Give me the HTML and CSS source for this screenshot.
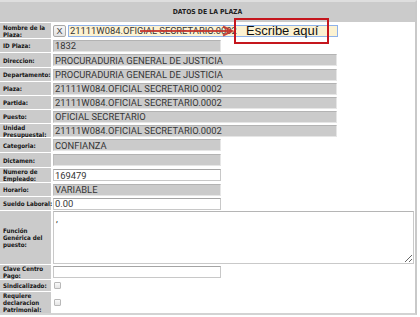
FILE: index.html
```html
<!DOCTYPE html>
<html lang="es">
<head>
    <meta charset="UTF-8">
    <meta name="viewport" content="width=device-width, initial-scale=1.0">
    <title>Datos de la plaza</title>
    <link rel="stylesheet" href="styles.css">
</head>
<body>
    <div class="panel">
        <div class="plaza-grid">
            <div class="titulo">DATOS DE LA PLAZA</div>

            <div class="lbl">Nombre de la<br>Plaza:</div>
            <div class="val">
                <button type="button" class="btn-x">X</button>
                <input type="text" class="campo nombre" spellcheck="false" value="21111W084.OFICIAL SECRETARIO.0002">
            </div>

            <div class="lbl">ID Plaza:</div>
            <div class="val"><input class="campo corto" readonly value="1832"></div>

            <div class="lbl">Direccion:</div>
            <div class="val"><input class="campo largo" readonly value="PROCURADURIA GENERAL DE JUSTICIA"></div>

            <div class="lbl">Departamento:</div>
            <div class="val"><input class="campo largo" readonly value="PROCURADURIA GENERAL DE JUSTICIA"></div>

            <div class="lbl">Plaza:</div>
            <div class="val"><input class="campo largo" readonly value="21111W084.OFICIAL SECRETARIO.0002"></div>

            <div class="lbl">Partida:</div>
            <div class="val"><input class="campo largo" readonly value="21111W084.OFICIAL SECRETARIO.0002"></div>

            <div class="lbl">Puesto:</div>
            <div class="val"><input class="campo largo" readonly value="OFICIAL SECRETARIO"></div>

            <div class="lbl">Unidad<br>Presupuestal:</div>
            <div class="val"><input class="campo largo" readonly value="21111W084.OFICIAL SECRETARIO.0002"></div>

            <div class="lbl">Categoria:</div>
            <div class="val"><input class="campo corto" readonly value="CONFIANZA"></div>

            <div class="lbl">Dictamen:</div>
            <div class="val"><input class="campo corto" readonly value=""></div>

            <div class="lbl">Numero de<br>Empleado:</div>
            <div class="val"><input class="campo corto blanco" value="169479"></div>

            <div class="lbl">Horario:</div>
            <div class="val"><input class="campo corto" readonly value="VARIABLE"></div>

            <div class="lbl">Sueldo Laboral:</div>
            <div class="val"><input class="campo corto blanco" value="0.00"></div>

            <div class="lbl">Función<br>Genérica del<br>puesto:</div>
            <div class="val"><textarea class="funcion" spellcheck="false">,</textarea></div>

            <div class="lbl">Clave Centro<br>Pago:</div>
            <div class="val"><input class="campo corto blanco" value=""></div>

            <div class="lbl">Sindicalizado:</div>
            <div class="val"><input type="checkbox" class="check"></div>

            <div class="lbl">Requiere<br>declaracion<br>Patrimonial:</div>
            <div class="val"><input type="checkbox" class="check"></div>
        </div>

        <!-- anotacion sobre la captura -->
        <svg class="flecha" width="98" height="12" viewBox="0 0 98 12">
            <line x1="2" y1="6" x2="94" y2="6" />
            <polyline points="85,1.5 94,6 85,10.5" />
        </svg>
        <div class="nota">Escribe aquí</div>
    </div>
</body>
</html>
```

FILE: styles.css
```css
body {
    margin: 0;
    background-color: #fff;
    font-family: "Liberation Sans", Arial, sans-serif;
}
.panel {
    position: relative;
    width: 415px;
    border-top: 2px solid #dedede;
    border-right: 2px solid #c9c9c9;
    border-bottom: 2px solid #d3d3d3;
}
.plaza-grid {
    display: grid;
    grid-template-columns: 51px 1fr;
    grid-template-rows: 20px 15px 13px 14px 13px 13px 13px 13px 13px 14px 14px 14px 13px 13px 53px 14px 11px 21px;
    column-gap: 2px;
    row-gap: 1px;
}
.titulo {
    grid-column: 1 / 3;
    background-color: #cbcbcb;
    display: flex;
    align-items: center;
    justify-content: center;
    font-family: "DejaVu Sans Condensed", "DejaVu Sans", sans-serif;
    font-weight: bold;
    font-size: 6.8px;
    color: #1e1e1e;
}
.lbl {
    background-color: #cbcbcb;
    display: flex;
    align-items: center;
    padding-left: 3px;
    font-family: "DejaVu Sans Condensed", "DejaVu Sans", sans-serif;
    font-weight: bold;
    font-size: 6.2px;
    line-height: 7px;
    color: #141414;
    white-space: nowrap;
}
.val {
    display: flex;
    align-items: center;
    gap: 2px;
}
.campo {
    box-sizing: border-box;
    height: 12px;
    margin: 0;
    padding: 0 1px;
    font-family: Roboto, "Liberation Sans", sans-serif;
    font-size: 9.4px;
    color: #353535;
    background-color: #cbcbcb;
    border: 1px solid #e6e6e6;
    border-top-color: #b3b3b3;
    border-left-color: #bdbdbd;
    outline: none;
}
.largo {
    width: 284px;
}
.corto {
    width: 168px;
}
.blanco {
    background-color: #fff;
    border-color: #c8c8c8;
    border-top-color: #a5a5a5;
}
.nombre {
    width: 270px;
    background-color: #fcf2d2;
    border: 1px solid #8fb2ea;
}
.btn-x {
    box-sizing: border-box;
    width: 13px;
    height: 12px;
    margin: 0;
    padding: 0;
    font-family: "Liberation Sans", Arial, sans-serif;
    font-size: 9px;
    line-height: 10px;
    color: #444;
    background: linear-gradient(#f6f6f6, #e2e2e2);
    border: 1px solid #a9a9a9;
    border-radius: 2px;
}
.funcion {
    box-sizing: border-box;
    width: 361px;
    height: 53px;
    margin: 0;
    padding: 1px 2px;
    font-family: Roboto, "Liberation Sans", sans-serif;
    font-size: 9.4px;
    color: #333;
    border: 1px solid #c9c9c9;
    border-top-color: #b5b5b5;
    outline: none;
}
.check {
    appearance: none;
    box-sizing: border-box;
    width: 7px;
    height: 7px;
    margin: 0 0 0 1px;
    background: linear-gradient(#fafafa, #e4e4e4);
    border: 1px solid #b8b8b8;
    border-radius: 1px;
}
.flecha {
    position: absolute;
    left: 138px;
    top: 23px;
}
.flecha line,
.flecha polyline {
    fill: none;
    stroke: #c4352e;
    stroke-width: 2;
    opacity: 0.9;
}
.nota {
    position: absolute;
    left: 234px;
    top: 16px;
    box-sizing: border-box;
    width: 95px;
    height: 26px;
    padding: 3px 0 0 10px;
    border: 2px solid #c5161d;
    font-family: "Liberation Sans", Arial, sans-serif;
    font-size: 13px;
    line-height: 15px;
    color: #111;
}
```
